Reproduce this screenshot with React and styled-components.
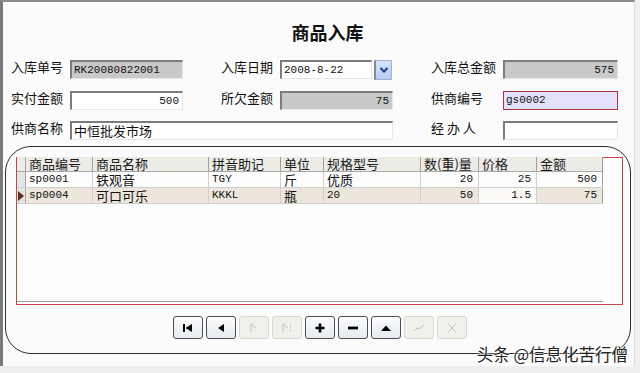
import React from "react";
import styled, { createGlobalStyle } from "styled-components";

const GlobalStyle = createGlobalStyle`
  body {
    margin: 0;
    background: #efefef;
    font-family: "Noto Sans CJK SC", "Liberation Sans", sans-serif;
  }
`;

const cjk = `"Noto Sans CJK SC", "Liberation Sans", sans-serif`;
const mono = `"Liberation Mono", "Noto Sans CJK SC", monospace`;

const columns = [
  { key: "code", title: "商品编号", width: 67 },
  { key: "name", title: "商品名称", width: 116 },
  { key: "py", title: "拼音助记", width: 72 },
  { key: "unit", title: "单位", width: 43 },
  { key: "spec", title: "规格型号", width: 97 },
  { key: "qty", title: "数(重)量", width: 58, right: true },
  { key: "price", title: "价格", width: 58, right: true },
  { key: "amount", title: "金额", width: 66, right: true },
];

const rows = [
  { code: "sp0001", name: "铁观音", py: "TGY", unit: "斤", spec: "优质", qty: "20", price: "25", amount: "500" },
  { code: "sp0004", name: "可口可乐", py: "KKKL", unit: "瓶", spec: "20", qty: "50", price: "1.5", amount: "75", current: true },
];

const latinKeys = ["code", "py", "qty", "price", "amount"];

export default function App() {
  return (
    <>
      <GlobalStyle />
      <Window>
        <Title>商品入库</Title>
        <Form>
          <Label>入库单号</Label>
          <Field $gray>RK20080822001</Field>
          <Label $col={4}>入库日期</Label>
          <DateBox>
            <Field $grow>2008-8-22</Field>
            <DropButton>
              <svg width="10" height="8" viewBox="0 0 10 8">
                <path d="M1.5 2 L5 5.5 L8.5 2" fill="none" stroke="#1d3f8a" strokeWidth="2" />
              </svg>
            </DropButton>
          </DateBox>
          <Label $col={7}>入库总金额</Label>
          <Field $gray $right>575</Field>

          <Label>实付金额</Label>
          <Field $right>500</Field>
          <Label $col={4}>所欠金额</Label>
          <Field $gray $right>75</Field>
          <Label $col={7}>供商编号</Label>
          <Field $focus>gs0002</Field>

          <Label>供商名称</Label>
          <Field $span $cjk>中恒批发市场</Field>
          <Label $col={7}>经 办 人</Label>
          <Field />
        </Form>

        <Panel>
          <GridFrame>
            <Grid>
              <HeaderRow>
                <Selector $header />
                {columns.map((c) => (
                  <HeaderCell key={c.key} $w={c.width}>{c.title}</HeaderCell>
                ))}
              </HeaderRow>
              {rows.map((r) => (
                <Row key={r.code} $current={r.current}>
                  <Selector>
                    {r.current && (
                      <svg width="6" height="10" viewBox="0 0 6 10">
                        <path d="M0 0 L6 5 L0 10 Z" fill="#6b2a1c" />
                      </svg>
                    )}
                  </Selector>
                  {columns.map((c) => (
                    <Cell
                      key={c.key}
                      $w={c.width}
                      $right={c.right}
                      $latin={latinKeys.includes(c.key) || /^[0-9]+$/.test(r[c.key])}
                      $light={r.current && c.key === "price"}
                      $last={c.key === "amount"}
                    >
                      {r[c.key]}
                    </Cell>
                  ))}
                </Row>
              ))}
            </Grid>
          </GridFrame>

          <NavBar>
            <NavButton>
              <svg width="12" height="10" viewBox="0 0 12 10">
                <rect x="1" y="1" width="2" height="8" fill="#000" />
                <path d="M10 1 L3.5 5 L10 9 Z" fill="#000" />
              </svg>
            </NavButton>
            <NavButton>
              <svg width="12" height="10" viewBox="0 0 12 10">
                <path d="M9 1 L3 5 L9 9 Z" fill="#000" />
              </svg>
            </NavButton>
            <NavButton $disabled>
              <svg width="12" height="10" viewBox="0 0 12 10">
                <path d="M3 9 L3 1 L8 5" fill="none" stroke="#bdbdb4" strokeWidth="1" />
              </svg>
            </NavButton>
            <NavButton $disabled>
              <svg width="12" height="10" viewBox="0 0 12 10">
                <path d="M2 9 L2 1 L7 5" fill="none" stroke="#bdbdb4" strokeWidth="1" />
                <path d="M9.5 1 L9.5 9" stroke="#bdbdb4" strokeWidth="1" strokeDasharray="1.5 1" />
              </svg>
            </NavButton>
            <NavButton>
              <svg width="12" height="12" viewBox="0 0 12 12">
                <path d="M6 1.5 V10.5 M1.5 6 H10.5" stroke="#000" strokeWidth="2.6" />
              </svg>
            </NavButton>
            <NavButton>
              <svg width="12" height="12" viewBox="0 0 12 12">
                <path d="M1 6 H11" stroke="#000" strokeWidth="2.8" />
              </svg>
            </NavButton>
            <NavButton>
              <svg width="12" height="10" viewBox="0 0 12 10">
                <path d="M1 8 L6 2.5 L11 8 Z" fill="#000" />
              </svg>
            </NavButton>
            <NavButton $disabled>
              <svg width="12" height="10" viewBox="0 0 12 10">
                <path d="M1 8 L4 5 L6 6 L11 2" fill="none" stroke="#c4c4bc" strokeWidth="1" />
              </svg>
            </NavButton>
            <NavButton $disabled>
              <svg width="12" height="12" viewBox="0 0 12 12">
                <path d="M2 1.5 L10 10.5 M10 1.5 L2 10.5" fill="none" stroke="#c4c4bc" strokeWidth="1" />
              </svg>
            </NavButton>
          </NavBar>
        </Panel>

        <Watermark>头条 @信息化苦行僧</Watermark>
      </Window>
    </>
  );
}

const Window = styled.div`
  position: relative;
  box-sizing: border-box;
  width: 635px;
  height: 366px;
  background: #fbfbfb;
  border-top: 2px solid #8a8a8a;
  border-left: 3px solid #7a7a7a;
  border-right: 1px solid #dcdcdc;
  display: flex;
  flex-direction: column;
`;

const Title = styled.div`
  margin-top: 20px;
  height: 20px;
  line-height: 20px;
  text-align: center;
  padding-left: 18px;
  font-family: ${cjk};
  font-size: 18px;
  font-weight: bold;
  color: #111;
`;

const Form = styled.div`
  margin-top: 18px;
  padding-left: 8px;
  display: grid;
  grid-template-columns: 59px 113px 38px 59px 113px 38px 72px 115px;
  grid-auto-rows: 19px;
  row-gap: 11.5px;
`;

const Label = styled.div`
  grid-column: ${(p) => p.$col || 1};
  font-family: ${cjk};
  font-size: 13px;
  line-height: 16px;
  color: #111;
  white-space: nowrap;
  align-self: start;
  margin-top: -1px;
`;

const Field = styled.div`
  box-sizing: border-box;
  height: 19px;
  ${(p) => (p.$span ? "grid-column: 2 / 6;" : "")}
  ${(p) => (p.$grow ? "flex: 1;" : "")}
  background: ${(p) => (p.$gray ? "#c9c9c9" : p.$focus ? "#e3e1fb" : "#ffffff")};
  border: 1px solid ${(p) => (p.$focus ? "#b4303c" : "#e6e6e6")};
  ${(p) =>
    p.$focus
      ? ""
      : `border-top: 2px solid #7c7c7c; border-left: 2px solid #7c7c7c;`}
  padding: 0 3px 0 2px;
  font-family: ${(p) => (p.$cjk ? cjk : mono)};
  font-size: ${(p) => (p.$cjk ? "13px" : "11px")};
  line-height: 16px;
  color: #111;
  text-align: ${(p) => (p.$right ? "right" : "left")};
  white-space: nowrap;
`;

const DateBox = styled.div`
  display: flex;
  gap: 2px;
  padding-right: 1px;
`;

const DropButton = styled.div`
  box-sizing: border-box;
  width: 18px;
  height: 20px;
  background: linear-gradient(#d6e3fd, #b7cbf4);
  border: 1px solid #9fb3d8;
  border-left: 2px solid #8a8a8a;
  display: flex;
  align-items: center;
  justify-content: center;
`;

const Panel = styled.div`
  box-sizing: border-box;
  margin: 6px 0 0 2px;
  width: 626px;
  height: 208px;
  border: 1px solid #2e2e2e;
  border-radius: 26px;
  padding: 10px 0 0 10px;
  display: flex;
  flex-direction: column;
`;

const GridFrame = styled.div`
  box-sizing: border-box;
  width: 607px;
  height: 148px;
  border: 1px solid #c8444a;
  border-left-color: #b84a4a;
  background: #fdfdfd;
`;

const Grid = styled.div`
  box-sizing: border-box;
  width: 586px;
  height: 145px;
  border-bottom: 1px solid #9c9c9c;
  margin-top: -1px;
`;

const HeaderRow = styled.div`
  display: flex;
  height: 15px;
  background: #ecebe6;
  border-bottom: 1px solid #a8a8a8;
  box-sizing: border-box;
`;

const Row = styled.div`
  display: flex;
  height: 16px;
  box-sizing: border-box;
  background: ${(p) => (p.$current ? "#ece7da" : "#fdfdfd")};
  border-bottom: 1px solid #cfcfcf;
`;

const Selector = styled.div`
  box-sizing: border-box;
  width: 9px;
  flex: none;
  background: ${(p) => (p.$header ? "#ecebe6" : "#e4e4e4")};
  border-right: 1px solid #a8a8a8;
  display: flex;
  align-items: center;
  justify-content: flex-start;
  padding-left: 1px;
`;

const HeaderCell = styled.div`
  box-sizing: border-box;
  width: ${(p) => p.$w}px;
  flex: none;
  border-right: 1px solid #a0a0a0;
  padding-left: 3px;
  font-family: ${cjk};
  font-size: 13px;
  line-height: 14px;
  color: #1a1a1a;
  white-space: nowrap;
`;

const Cell = styled.div`
  box-sizing: border-box;
  width: ${(p) => p.$w}px;
  flex: none;
  border-right: 1px solid ${(p) => (p.$last ? "#a0a0a0" : "#cfcfcf")};
  padding: 0 5px 0 3px;
  background: ${(p) => (p.$light ? "#fbfaf6" : "transparent")};
  font-family: ${(p) => (p.$latin ? mono : cjk)};
  font-size: ${(p) => (p.$latin ? "11px" : "13px")};
  line-height: 15px;
  color: #111;
  text-align: ${(p) => (p.$right ? "right" : "left")};
  white-space: nowrap;
`;

const NavBar = styled.div`
  margin-top: 11px;
  margin-left: 157px;
  display: flex;
  gap: 3px;
`;

const NavButton = styled.div`
  box-sizing: border-box;
  width: 30px;
  height: 23px;
  border-radius: 3px;
  border: 1px solid ${(p) => (p.$disabled ? "#d8d8d0" : "#4a4f55")};
  background: ${(p) =>
    p.$disabled ? "#f1f0ea" : "linear-gradient(#fbfcfd, #e6eaee)"};
  display: flex;
  align-items: center;
  justify-content: center;
`;

const Watermark = styled.div`
  position: absolute;
  right: 6px;
  bottom: 2px;
  font-family: ${cjk};
  font-size: 16.5px;
  line-height: 20px;
  color: #222;
  text-shadow: 0 0 2px #fff, 0 0 2px #fff, 0 0 1px #fff;
`;
